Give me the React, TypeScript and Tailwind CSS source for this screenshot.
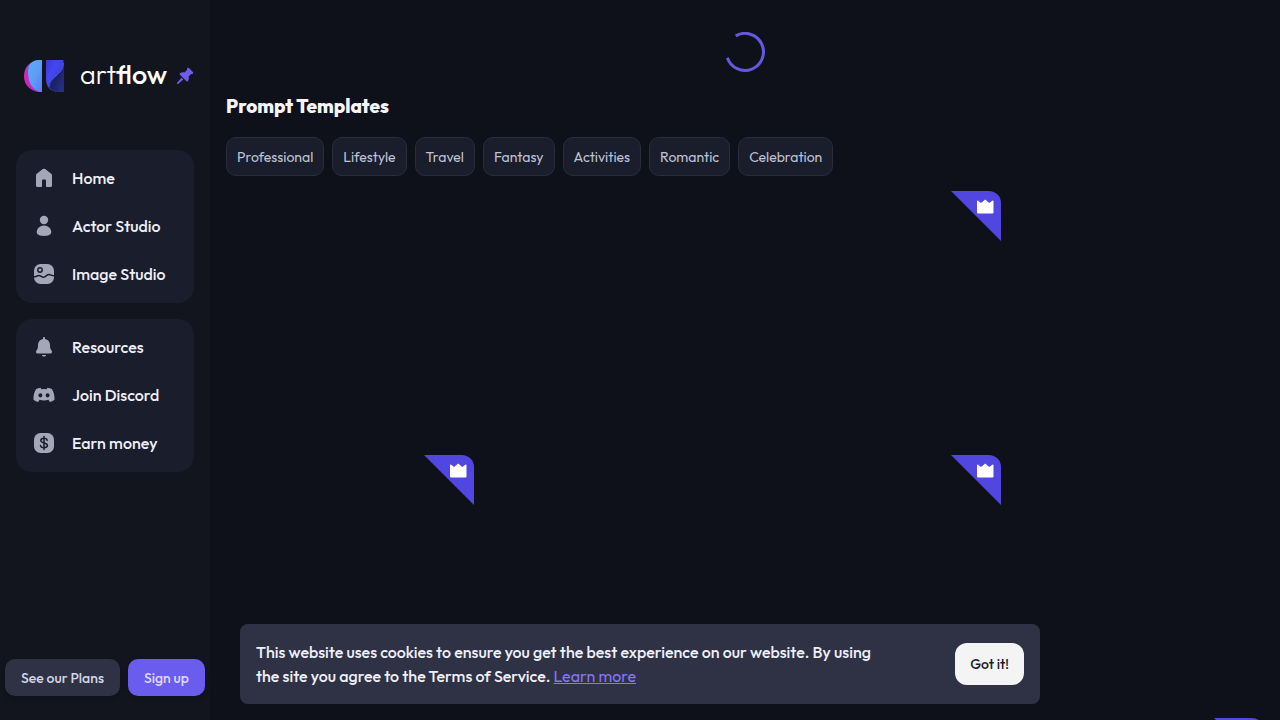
import React, { useState } from 'react';
import { clsx } from 'clsx';

interface MenuItem {
  label: string;
  href: string;
  icon: React.ReactNode;
}

function HomeIcon() {
  return (
    <svg viewBox="0 0 24 24" className="size-6" fill="currentColor" aria-hidden="true">
      <path d="M10.8 3.1a2 2 0 0 1 2.4 0l6 4.6c.5.4.8.9.8 1.5V19.500a1.500 1.500 0 0 1-1.500 1.500H14.800a.8.8 0 0 1-.8-.8V14.500a.9.9 0 0 0-.9-.9h-2.200a.9.900 0 0 0-.9.9v5.700a.8.8 0 0 1-.8.8H5.500A1.500 1.500 0 0 1 4 19.500V9.200c0-.6.300-1.100.8-1.500z" />
    </svg>
  );
}

function ActorIcon() {
  return (
    <svg viewBox="0 0 24 24" className="size-6" fill="currentColor" aria-hidden="true">
      <circle cx="12" cy="6" r="4.200" />
      <path d="M12 11.500c4 0 7.300 3.400 7.300 6.600 0 2.700-3.300 3.900-7.300 3.900s-7.300-1.200-7.300-3.900c0-3.200 3.300-6.600 7.300-6.600z" />
    </svg>
  );
}

function ImageIcon() {
  return (
    <svg viewBox="0 0 24 24" className="size-6" aria-hidden="true">
      <rect x="2" y="2" width="20" height="20" rx="6.500" fill="currentColor" />
      <circle cx="8" cy="8" r="2.200" fill="none" stroke="#1a1d2b" strokeWidth="1.500" />
      <path
        d="M1.500 14.600c1.400.2 2.400.200 3.400-.5 1.300-.9 2.100-1.100 3.400-.2 1.600 1.200 2.600 2 4.600.9 1.300-.7 2.300-2.200 4-2.200 1.900 0 3 1.300 5.600 1.200"
        fill="none"
        stroke="#1a1d2b"
        strokeWidth="1.500"
      />
    </svg>
  );
}

function BellIcon() {
  return (
    <svg viewBox="0 0 24 24" className="size-6" fill="currentColor" aria-hidden="true">
      <path d="M12 2c.6 0 1 .5 1 1.200v.7c3.100.5 5 3 5 6 0 3 .5 4.300 1.600 5.600.8 1 .5 3-1.200 3H5.600c-1.700 0-2-2-1.200-3C5.500 14.200 6 12.900 6 9.900c0-3 1.900-5.500 5-6v-.7C11 2.500 11.400 2 12 2z" />
      <path d="M9.800 20h4.400c-.4 1-1.200 1.600-2.200 1.600S10.200 21 9.800 20z" />
    </svg>
  );
}

function DiscordIcon() {
  return (
    <svg viewBox="0 0 24 24" className="size-6" fill="currentColor" aria-hidden="true">
      <path
        fillRule="evenodd"
        d="M8.500 4.800 9.400 6.200a17 17 0 0 1 5.200 0l.9-1.400c1.600.2 3 .6 4.300 1.200 1.900 3 2.900 6.300 2.700 10.700-1.500 1.200-3 2-4.600 2.400l-1.500-2.300a14 14 0 0 1-8.800 0l-1.500 2.300c-1.600-.4-3.100-1.200-4.600-2.400C1.300 12.300 2.300 9 4.200 6c1.300-.6 2.700-1 4.300-1.200zM8.400 10.200a2 2.100 0 1 0 0 4.200 2 2.100 0 0 0 0-4.200zm7.200 0a2 2.100 0 1 0 0 4.200 2 2.100 0 0 0 0-4.200z"
      />
    </svg>
  );
}

function MoneyIcon() {
  return (
    <svg viewBox="0 0 24 24" className="size-6" aria-hidden="true">
      <rect x="2" y="2" width="20" height="20" rx="6.500" fill="currentColor" />
      <path
        d="M12 5.500v13M15.200 9.300c-.2-1.300-1.500-2-3.200-2s-3.200.8-3.200 2.300c0 3.200 6.600 1.500 6.600 4.700 0 1.600-1.500 2.400-3.400 2.400s-3.300-.8-3.500-2.200"
        fill="none"
        stroke="#1a1d2b"
        strokeWidth="1.500"
        strokeLinecap="round"
      />
    </svg>
  );
}

function LogoMark() {
  return (
    <svg viewBox="0 0 40 32" className="h-8 w-10" aria-hidden="true">
      <defs>
        <linearGradient id="half-blue" x1="0" y1="0" x2="1" y2="1">
          <stop offset="0" stopColor="#4fb4f4" />
          <stop offset="0.5" stopColor="#5f9cf8" />
          <stop offset="1" stopColor="#5a7cf4" />
        </linearGradient>
        <linearGradient id="half-pink" x1="0" y1="0" x2="0" y2="1">
          <stop offset="0" stopColor="#7a4fd8" />
          <stop offset="0.5" stopColor="#d626b4" />
          <stop offset="1" stopColor="#b02fc4" />
        </linearGradient>
        <linearGradient id="block" x1="0" y1="0" x2="1" y2="1">
          <stop offset="0" stopColor="#3a36d8" />
          <stop offset="0.35" stopColor="#4447f0" />
          <stop offset="1" stopColor="#343bb8" />
        </linearGradient>
        <linearGradient id="shade" x1="0" y1="0" x2="1" y2="1">
          <stop offset="0" stopColor="#3340b8" />
          <stop offset="0.5" stopColor="#1c2263" />
          <stop offset="1" stopColor="#2b318f" />
        </linearGradient>
      </defs>
      <path d="M18 0v32h-3C6 31 0 25 0 16S6 1 15 0z" fill="url(#half-pink)" />
      <path d="M18 0v32h-2C9 30 4 23 4 12 4 8 5 5 7 3c2-2 5-3 8-3z" fill="url(#half-blue)" />
      <path d="M22 0h17.500v32H34c-7 0-12-5-12-13z" fill="url(#block)" />
      <path d="M39.500 3v29H34c-4 0-7-2-9-5 0-5 3-8 7-11 4-4 7-6 7.500-13z" fill="url(#shade)" />
      <path d="M39.500 3c-.5 7-3.500 9-7.500 13-4 3-7 6-7 11" fill="none" stroke="#4a55d8" strokeWidth="1" />
    </svg>
  );
}

function PinIcon() {
  return (
    <svg viewBox="0 0 18 18" className="size-[18px]" fill="currentColor" aria-hidden="true">
      <path d="M11.300 1.100c.5-.5 1.100-.5 1.600 0l4 4c.5.500.5 1.100 0 1.600-.5.500-1.100.5-1.700.3l-2.500 2.600c.4 1.700.100 3.400-.8 4.600-.4.500-1 .5-1.500 0L3.900 7.700c-.5-.5-.4-1.100.1-1.500 1.200-.9 2.800-1.200 4.500-.8L11.100 2.800c-.2-.6-.2-1.200.2-1.700z" />
      <path d="M5.500 10.800 7.300 12.600 2.200 16.900.9 17.100 1.100 15.800z" />
    </svg>
  );
}

function CrownBadge() {
  return (
    <svg viewBox="0 0 50 50" className="absolute top-0 right-0 size-[50px]" role="img" aria-label="Premium">
      <path d="M0 0h38a12 12 0 0 1 12 12v38z" fill="#5246e0" />
      <path
        d="M26 10.200c0-.7.700-1 1.200-.5l2.800 2.200 3.400-2.700c.5-.5 1.200-.5 1.700 0l3.200 2.700 2.900-2.200c.5-.5 1.300-.2 1.300.5V21.500a1 1 0 0 1-1 1H27a1 1 0 0 1-1-1z"
        fill="#fff"
      />
    </svg>
  );
}

function Spinner() {
  return (
    <svg viewBox="0 0 40 40" className="size-10" role="status" aria-label="Loading">
      <path d="M10.700 3.900A18.500 18.500 0 1 1 2.400 25.700" fill="none" stroke="#6558e0" strokeWidth="3" />
    </svg>
  );
}

function Menu({ items }: { items: MenuItem[] }) {
  return (
    <ul className="flex flex-col rounded-2xl bg-[#1a1d2b] pt-1 pb-[5px]">
      {items.map((item) => (
        <li key={item.label}>
          <a href={item.href} className="flex h-12 items-center gap-4 px-4 text-base font-medium text-[#eeeffa]">
            <span className="text-[#a5a7b8]">{item.icon}</span>
            {item.label}
          </a>
        </li>
      ))}
    </ul>
  );
}

const studioItems: MenuItem[] = [
  { label: 'Home', href: '#home', icon: <HomeIcon /> },
  { label: 'Actor Studio', href: '#actor-studio', icon: <ActorIcon /> },
  { label: 'Image Studio', href: '#image-studio', icon: <ImageIcon /> },
];

const moreItems: MenuItem[] = [
  { label: 'Resources', href: '#resources', icon: <BellIcon /> },
  { label: 'Join Discord', href: '#discord', icon: <DiscordIcon /> },
  { label: 'Earn money', href: '#earn', icon: <MoneyIcon /> },
];

const categories = ['Professional', 'Lifestyle', 'Travel', 'Fantasy', 'Activities', 'Romantic', 'Celebration'];

const templates = [
  { id: 1, premium: false },
  { id: 2, premium: false },
  { id: 3, premium: true },
  { id: 4, premium: false },
  { id: 5, premium: true },
  { id: 6, premium: false },
  { id: 7, premium: true },
  { id: 8, premium: false },
  { id: 9, premium: false },
  { id: 10, premium: false },
  { id: 11, premium: false },
  { id: 12, premium: true },
];

export default function App() {
  const [category, setCategory] = useState('');
  const [showCookies, setShowCookies] = useState(true);

  return (
    <div className="flex h-screen w-full overflow-hidden bg-[#0f111a] font-['Outfit','Lato',sans-serif] text-white">
      {/* Sidebar */}
      <aside className="flex w-[210px] shrink-0 flex-col bg-[#12151e]">
        <div className="flex items-center px-4 pt-14 pb-[54px]">
          <a href="#home" className="flex h-10 items-center gap-4 pl-2">
            <LogoMark />
            <span className="w-[88px] pb-1 text-[27px] leading-8 font-light">
              art<span className="font-medium">flow</span>
            </span>
          </a>
          <button type="button" aria-label="Pin sidebar" className="ml-2 text-[#6c5ce7]">
            <PinIcon />
          </button>
        </div>

        <nav className="flex flex-col gap-4 px-4">
          <Menu items={studioItems} />
          <Menu items={moreItems} />
        </nav>

        <div className="mt-auto flex justify-center gap-2 pb-6 text-sm font-medium whitespace-nowrap">
          <button type="button" className="h-[37px] rounded-[10px] bg-[#2f3245] px-4 text-[#d3d5e6] shadow-md">
            See our Plans
          </button>
          <button type="button" className="h-[37px] rounded-[10px] bg-[#6a5cec] px-4 text-[#dcdaf8] shadow-md">
            Sign up
          </button>
        </div>
      </aside>

      {/* Content */}
      <main className="min-w-0 flex-1 overflow-y-auto px-4 pt-8 [scrollbar-width:none]">
        <div className="flex justify-center">
          <Spinner />
        </div>

        <h2 className="mt-5 text-[19px] leading-7 font-extrabold text-[#f4f4fb]">Prompt Templates</h2>

        <div className="mt-[17px] flex gap-2">
          {categories.map((name) => (
            <button
              key={name}
              type="button"
              onClick={() => setCategory(name)}
              className={clsx(
                'h-[39px] rounded-[10px] border px-[10px] text-sm text-[#bfc1d4]',
                category === name ? 'border-[#6a5cec] bg-[#2f3245]' : 'border-[#2a2d3b] bg-[#1a1d2b]'
              )}
            >
              {name}
            </button>
          ))}
        </div>

        <div className="mt-[15px] grid grid-cols-4 gap-4 pb-4">
          {templates.map((template) => (
            <div key={template.id} className="relative aspect-square rounded-xl">
              {template.premium && <CrownBadge />}
            </div>
          ))}
        </div>
      </main>

      {/* Cookie notice */}
      {showCookies && (
        <div className="fixed inset-x-0 bottom-4 mx-auto flex max-w-[800px] items-center justify-between rounded-lg bg-[#2f3245] p-4">
          <p className="max-w-[640px] text-base font-medium text-[#eeeffa]">
            This website uses cookies to ensure you get the best experience on our website. By using the site you agree
            to the Terms of Service.{' '}
            <a href="#terms" className="font-normal text-[#8676f5] underline">
              Learn more
            </a>
          </p>
          <button
            type="button"
            onClick={() => setShowCookies(false)}
            className="h-[42px] rounded-xl bg-[#f4f4f4] px-[15px] text-sm font-medium text-[#1a1d2b]"
          >
            Got it!
          </button>
        </div>
      )}
    </div>
  );
}
